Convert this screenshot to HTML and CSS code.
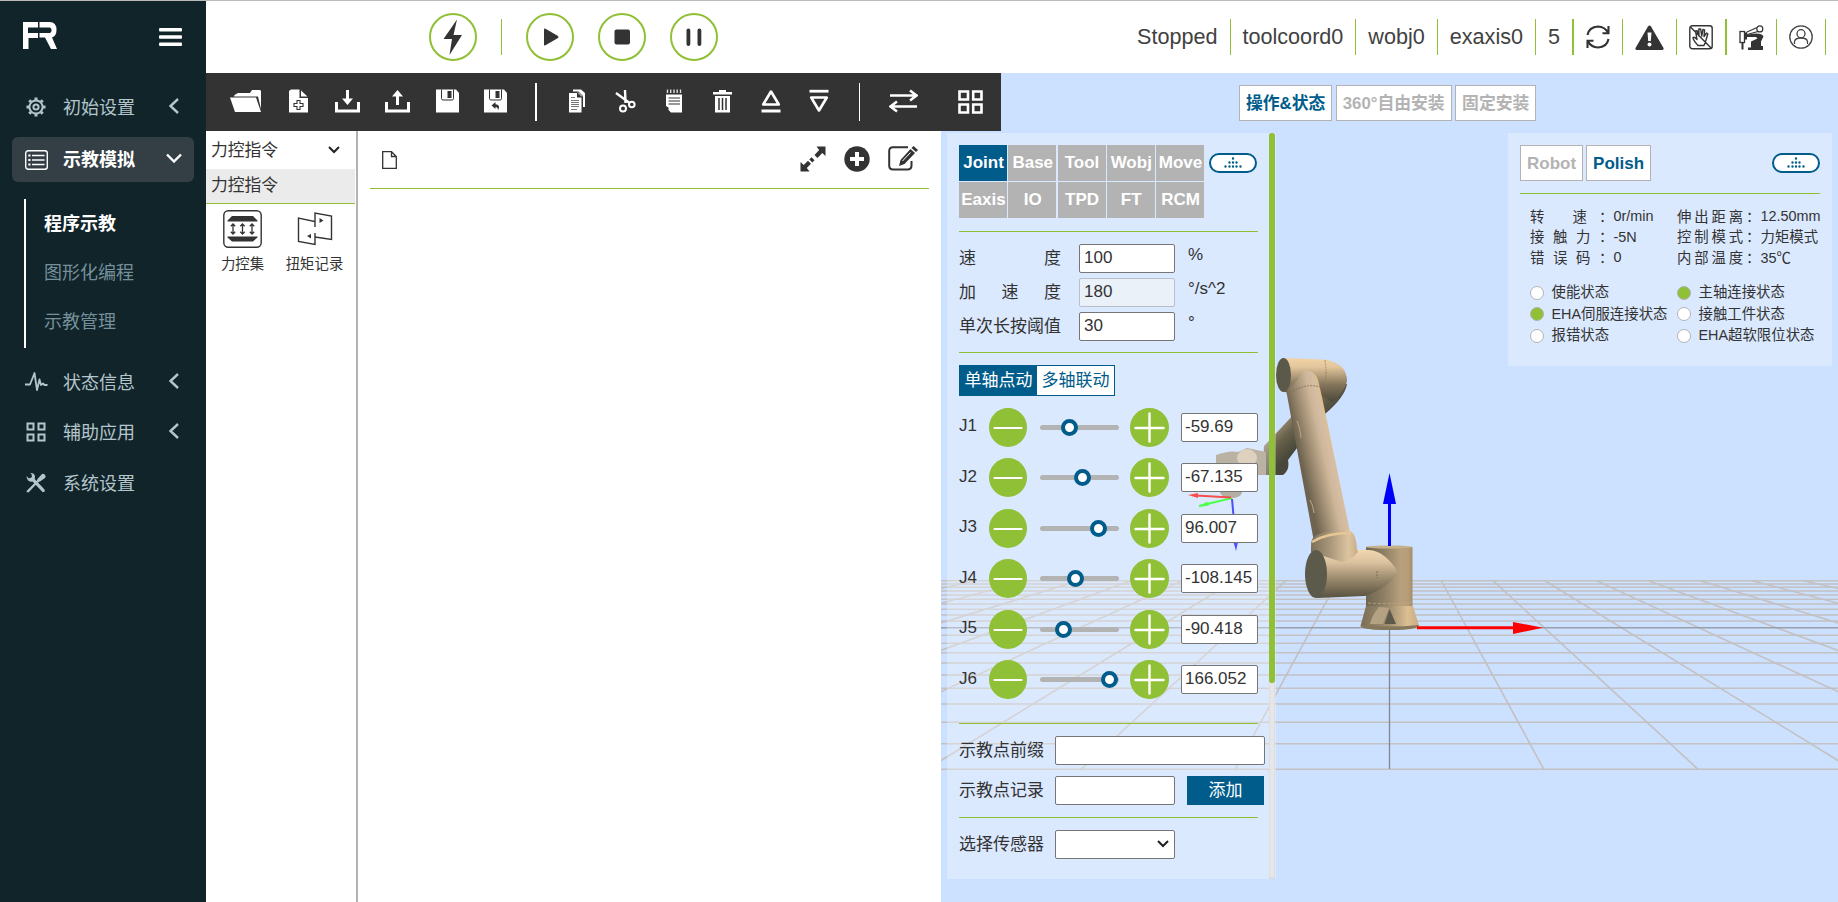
FILE: index.html
```html
<!DOCTYPE html>
<html lang="zh-CN">
<head>
<meta charset="utf-8">
<title>FR</title>
<link rel="stylesheet" href="styles.css">
</head>
<body>
<div class="app">
  <aside class="sidebar">
    <div class="brand">
      <svg class="logo" viewBox="0 0 34 27" width="34" height="27" fill="#fff"><path d="M0 0H15V5.500H5V11H15V16H5.500V27H0ZM16.500 0H26.500Q33.500 0 33.500 8Q33.500 14 29 15.500L34 27H28L22 15.500H16.500V11H26Q28.500 11 28.500 8.200T26 5.500H16.500Z"/></svg>
      <svg class="burger" viewBox="0 0 23 18" width="23" height="18" fill="#fff"><rect width="23" height="3.600" rx="1"/><rect y="7.200" width="23" height="3.600" rx="1"/><rect y="14.400" width="23" height="3.600" rx="1"/></svg>
    </div>
    <nav>
      <div class="item">
        <svg viewBox="0 0 22 22" width="22" height="22" fill="none" stroke="#b4c6cc" stroke-width="2"><circle cx="11" cy="11" r="6.600"/><circle cx="11" cy="11" r="2.600"/><path stroke-width="3" d="M11 1.500V4M11 18V20.500M1.500 11H4M18 11H20.500M4.300 4.300L6 6M16 16L17.700 17.700M17.700 4.300L16 6M6 16L4.300 17.700"/></svg>
        <span>初始设置</span>
        <svg class="chev" viewBox="0 0 10 16" width="10" height="16"><path d="M9 1L1.500 8L9 15"/></svg>
      </div>
      <div class="item active">
        <svg viewBox="0 0 23 20" width="23" height="20" fill="none" stroke="#fff" stroke-width="1.400"><rect x=".7" y=".7" width="21.600" height="18.600" rx="2.500"/><path d="M7 5.500H19.500M7 10H19.500M7 14.500H19.500"/><path stroke-width="2" d="M3.300 5.500H5.500M3.300 10H5.500M3.300 14.500H5.500"/></svg>
        <span>示教模拟</span>
        <svg class="chev down" viewBox="0 0 16 10" width="16" height="10"><path d="M1 1.500L8 8.500L15 1.500"/></svg>
      </div>
      <div class="sub">
        <div class="current">程序示教</div>
        <div>图形化编程</div>
        <div>示教管理</div>
      </div>
      <div class="item">
        <svg viewBox="0 0 23 22" width="23" height="22" fill="none" stroke="#b4c6cc" stroke-width="1.800" stroke-linejoin="round"><path d="M0 13.500H5L8 6L9.500 2L12 19L14.500 8.500L16 14L18 12.500L19.500 14H22.500"/></svg>
        <span>状态信息</span>
        <svg class="chev" viewBox="0 0 10 16" width="10" height="16"><path d="M9 1L1.500 8L9 15"/></svg>
      </div>
      <div class="item">
        <svg viewBox="0 0 22 22" width="22" height="22" fill="none" stroke="#b4c6cc" stroke-width="2"><path d="M2.500 2.500h6v6h-6zM13.500 2.500h6v6h-6zM2.500 13.500h6v6h-6zM13.500 13.500h6v6h-6z"/></svg>
        <span>辅助应用</span>
        <svg class="chev" viewBox="0 0 10 16" width="10" height="16"><path d="M9 1L1.500 8L9 15"/></svg>
      </div>
      <div class="item">
        <svg viewBox="0 0 22 22" width="22" height="22" fill="#b4c6cc"><path d="M1.500 4L4 6.500L7 5L6.500 2L5 1Q9 .5 10 4L9.700 7L19.500 17.500Q20.500 20.500 17.500 20L7.500 9.500Q2 10.500 1.500 4ZM17 2Q18.500 1 20 3Q21.500 4.500 20 6L15 9.500L13.500 10L3.500 20.500L1.500 20L2 18.500L12 8.500L12.500 7Z"/></svg>
        <span>系统设置</span>
      </div>
    </nav>
  </aside>

  <div class="main">
    <header class="topbar">
      <div class="run">
        <button class="round"><svg viewBox="0 0 48 48" width="48" height="48"><path d="M28 6.500L14.500 26H23L20.500 42L33 22H24.500Z"/></svg></button>
        <i class="sep"></i>
        <button class="round"><svg viewBox="0 0 48 48" width="48" height="48"><path d="M18 16.500Q18 15 19.500 15.800L32 23Q33 24 32 25L19.500 32.200Q18 33 18 31.500Z"/></svg></button>
        <button class="round"><svg viewBox="0 0 48 48" width="48" height="48"><rect x="16.500" y="16.500" width="15.500" height="15" rx="2"/></svg></button>
        <button class="round"><svg viewBox="0 0 48 48" width="48" height="48"><rect x="16.500" y="15.500" width="3.800" height="17.500" rx="1.900"/><rect x="27.500" y="15.500" width="3.800" height="17.500" rx="1.900"/></svg></button>
      </div>
      <div class="status">
        <span>Stopped</span><span>toolcoord0</span><span>wobj0</span><span>exaxis0</span><span>5</span>
        <span><svg viewBox="0 0 24 24" width="24" height="24" fill="none" stroke="#333" stroke-width="2.100"><path d="M1.500 10Q3 2 12 1.500Q19 1.700 22.200 8M22.500 1V8.200H16.500M22.500 14Q21 22 12 22.500Q5 22.300 1.800 16M1.500 23V15.800H7.500"/></svg></span>
        <span><svg viewBox="0 0 29 25" width="29" height="25"><path d="M13 1.500Q14.500-.5 16 1.500L28.500 23Q29 25 27 25H2Q0 25 .5 23Z" fill="#333"/><path d="M12.500 7.500H16.500L15.800 16H13.200Z" fill="#fff"/><circle cx="14.500" cy="19.500" r="2" fill="#fff"/></svg></span>
        <span><svg viewBox="0 0 24 25" width="24" height="25" fill="none" stroke="#333" stroke-width="1.400" stroke-linejoin="round"><rect x=".8" y=".8" width="22.400" height="23" rx="2.500"/><path d="M1.500 2L22.500 23.500M9 20.500Q4 15 4 12.500L6 12.500L8 14.500L6.500 6L8.200 5.800L10 11L9.800 4H11.700L12.700 11L14 4.500L15.600 5L15 11.500L17.500 8L18.800 9L17 15L15 20.500Z"/></svg></span>
        <span><svg viewBox="0 0 25 25" width="25" height="25"><path d="M7 7.500L18 2.500M8 9.500L19 6.500" stroke="#333" stroke-width="1.100"/><circle cx="20.800" cy="3.900" r="3" fill="#fff" stroke="#333" stroke-width="1.200"/><rect x="1" y="6.500" width="4.500" height="11" fill="#fff" stroke="#333" stroke-width="1.300"/><path d="M2.500 17.500H4.500V24.500H2.500ZM5.500 7.500H8V9.500L17 8.500Q23.500 8.500 24.500 11.500L22 16.500V21H24V25H9V22.500H12V16.500L18.500 13.500L17 12L8 12V14.500H5.500Z" fill="#333"/></svg></span>
        <span><svg viewBox="0 0 24 24" width="24" height="24" fill="none" stroke="#444" stroke-width="1.300"><circle cx="12" cy="12" r="11.200"/><circle cx="12" cy="8.700" r="4"/><path d="M5.500 19V16.500Q6 13 12 13T18.500 16.500V19"/></svg></span>
      </div>
    </header>

    <div class="work">
      <section class="program">
        <div class="toolbar">
          <svg viewBox="0 0 31 24" width="31" height="24"><path d="M4.500 6L8 4H20L22 1H30L31 2V20L28 7.500H4Z"/><path d="M0 8.500H26L31 23H5Z"/></svg>
          <svg viewBox="0 0 19 24" width="19" height="24"><path d="M0 2L2 .5H10.500V9H19V23.500H0ZM12 1.500L18.500 7.500H12Z"/><path d="M8 11.500H11V14.500H14V17.500H11V20.500H8V17.500H5V14.500H8Z" fill="#fff" stroke="#333" stroke-width="1.100"/></svg>
          <svg viewBox="0 0 25 24" width="25" height="24"><path d="M0 13H3V20.500H22V13H25V23.500H0ZM11 1H14V9.500H18L12.500 16L7 9.500H11Z"/></svg>
          <svg viewBox="0 0 25 24" width="25" height="24"><path d="M0 13H3V20.500H22V13H25V23.500H0ZM11 16H14V7.500H18L12.500 1L7 7.500H11Z"/></svg>
          <svg viewBox="0 0 23 24" width="23" height="24"><path d="M0 .5H20L23 4V23.500H0Z"/><path d="M5.500 .5V9.500Q5.500 11 7 11H16Q17.500 11 17.500 9.500V.5" fill="none" stroke="#333"/><rect x="11.500" y="2" width="4" height="7" fill="#333"/></svg>
          <svg viewBox="0 0 23 24" width="23" height="24"><path d="M0 .5H20L23 4V23.500H0Z"/><path d="M5.500 .5V9.500Q5.500 11 7 11H16Q17.500 11 17.500 9.500V.5" fill="none" stroke="#333"/><path fill="#333" d="M11.500 2h4v7h-4zM7.500 16.500L11.500 13V15.300Q17 15.500 14 21.500Q14 18 11.500 18V20Z"/></svg>
          <i class="bar wide"></i>
          <svg viewBox="0 0 16 24" width="16" height="24"><path d="M4 .5H12L16 4V18H14V7L9.500 2.500H4Z"/><path d="M0 4H8V8.500H12.500V23.500H0Z"/><path d="M9 3.500L13 7.500" stroke="#fff"/><path d="M2 8.500H6M2 11.500H10M2 13.500H10M2 15.500H10M2 17.500H10M2 20.500H8" stroke="#777" stroke-width="1.200"/></svg>
          <svg viewBox="0 0 21 24" width="21" height="24" fill="none" stroke="#fff" stroke-width="2.400"><path d="M10 1L10.500 14M1 4L14 13.500"/><circle cx="8" cy="19.500" r="3" stroke-width="2"/><circle cx="16.800" cy="15.500" r="2.800" stroke-width="2"/></svg>
          <svg viewBox="0 0 16 24" width="16" height="24"><path d="M0 5.500H16V23.500H5L2.500 21V18.500L0 17Z"/><path d="M2.500 9H14M2.500 12H14M2.500 15H14" stroke="#333" stroke-width="1.100"/><path d="M1.500 .5V4M4.700 .5V4M8 .5V4M11.200 .5V4M14.500 .5V4" stroke="#ddd" stroke-width="1.400"/></svg>
          <svg viewBox="0 0 19 24" width="19" height="24"><path d="M0 3H6V1H13V3H19V5.500H0ZM2 7H17V23.500H2Z"/><path d="M6 9V21M9.500 9V21M13 9V21" stroke="#333" stroke-width="1.500"/></svg>
          <svg viewBox="0 0 20 24" width="20" height="24"><path d="M10 2.500L17.800 15.500H2.200Z" fill="none" stroke="#fff" stroke-width="2.600" stroke-linejoin="round"/><path d="M.5 20.500H19.500V23.500H.5Z"/></svg>
          <svg viewBox="0 0 20 24" width="20" height="24"><path d="M10 21.500L17.800 8.500H2.200Z" fill="none" stroke="#fff" stroke-width="2.600" stroke-linejoin="round"/><path d="M.5 .8H19.500V3.600H.5Z"/></svg>
          <i class="bar"></i>
          <svg viewBox="0 0 29 24" width="29" height="24" fill="none" stroke="#fff" stroke-width="2.500"><path d="M1 6.500H27M21 1.500L27.500 6.500L21 11.500M28 17.500H2M8 12.500L1.500 17.500L8 22.500"/></svg>
          <svg viewBox="0 0 25 24" width="25" height="24" fill="none" stroke="#fff" stroke-width="2.600"><path d="M1.500 1.500H10V9.500H1.500ZM15.200 1.500H23.500V9.500H15.200ZM1.500 14.500H10V22.500H1.500ZM15.200 14.500H23.500V22.500H15.200Z"/></svg>
        </div>
        <div class="body">
          <div class="palette">
            <div class="pick"><span>力控指令</span><svg viewBox="0 0 12 8" width="12" height="8"><path d="M1 1L6 6L11 1" fill="none" stroke="#222" stroke-width="2"/></svg></div>
            <div class="group">力控指令</div>
            <div class="cmds">
              <div><svg viewBox="0 0 39 38" width="39" height="38"><rect x=".8" y=".8" width="37.400" height="36.400" rx="4.500" fill="#fff" stroke="#333" stroke-width="1.400"/><path d="M9 6H30L34.500 10.500V11.500H4.500V10.500ZM4.500 26.500H34.500V27.500L30 31.500H9L4.500 27.500Z" fill="#333"/><path d="M10 14V24M7.800 16.300L10 14L12.200 16.300M7.800 21.700L10 24L12.200 21.700M19.500 14V24M17.300 16.300L19.500 14L21.700 16.300M17.300 21.700L19.500 24L21.700 21.700M29 14V24M26.800 16.300L29 14L31.200 16.300M26.800 21.700L29 24L31.200 21.700" fill="none" stroke="#333" stroke-width="1.300"/></svg><span>力控集</span></div>
              <div><svg viewBox="0 0 36 38" width="36" height="38"><path d="M18 23V34.500L1.500 31.500V8L18 11.500V17M18 11.500V3L34.500 6V29.500L18 27" fill="none" stroke="#333" stroke-width="1.400"/><path d="M22.500 8L26.500 10.500L22.500 13ZM14 24V28.500L10 26Z" fill="#333"/></svg><span>扭矩记录</span></div>
            </div>
          </div>
          <div class="editor">
            <div class="edithead">
              <svg class="file" viewBox="0 0 15 18" width="15" height="18" fill="none" stroke="#333" stroke-width="1.300"><path d="M.7 .7H9.500L14.300 5.500V17.300H.7ZM9.500 .7V5.500H14.300"/></svg>
              <svg viewBox="0 0 26 26" width="26" height="26" fill="#333"><path d="M25.500 .5V10L22.300 7L17.500 12L14.500 9L19.200 4L16.500 .5ZM.5 25.500V16L3.700 19L8 14.700L11 17.700L6.800 22L9.500 25.500ZM9.300 13.500L11.500 11.300L14.500 14.300L12.300 16.500Z"/></svg>
              <svg viewBox="0 0 26 26" width="26" height="26"><circle cx="13" cy="13" r="12.700" fill="#333"/><path d="M13 6V20M6 13H20" stroke="#fff" stroke-width="4"/></svg>
              <svg viewBox="0 0 30 26" width="30" height="26"><path d="M20 1.200H5Q1.200 1.200 1.200 5V19.500Q1.200 23.500 5 23.500H19.500Q23.500 23.500 23.500 19.500V15" fill="none" stroke="#333" stroke-width="2"/><path d="M22.500 3L27 7L16.500 18L11 20L12.500 14ZM23.500 2L25.500 0L30 4L28 6Z" fill="#333"/><path d="M14.500 15L22.500 6.500" stroke="#fff"/></svg>
            </div>
          </div>
        </div>
      </section>

      <section class="view">
        <svg class="scene" viewBox="941 73 897 829" width="897" height="829">
          <defs>
            <linearGradient id="tube" x1="0" y1="0" x2="0" y2="1"><stop offset="0" stop-color="#f2d6b0"/><stop offset=".25" stop-color="#dcc3a0"/><stop offset=".6" stop-color="#9b8a6d"/><stop offset="1" stop-color="#56513f"/></linearGradient>
            <linearGradient id="elbow" x1="0" y1="0" x2="0" y2="1"><stop offset="0" stop-color="#f2d3a5"/><stop offset=".2" stop-color="#e3c69c"/><stop offset=".6" stop-color="#85765b"/><stop offset="1" stop-color="#4b4738"/></linearGradient>
            <linearGradient id="arm" gradientUnits="userSpaceOnUse" x1="1302" y1="465" x2="1337" y2="457"><stop offset="0" stop-color="#6e634e"/><stop offset=".35" stop-color="#a39076"/><stop offset=".65" stop-color="#cdb698"/><stop offset=".82" stop-color="#d4bda5"/><stop offset="1" stop-color="#e0bf8a"/></linearGradient>
            <linearGradient id="collar" x1="0" y1="0" x2="1" y2="0"><stop offset="0" stop-color="#7d7058"/><stop offset=".4" stop-color="#a8967a"/><stop offset=".8" stop-color="#dcc4a0"/><stop offset="1" stop-color="#c9ae84"/></linearGradient>
            <linearGradient id="base" x1="0" y1="0" x2="1" y2="0"><stop offset="0" stop-color="#6e664f"/><stop offset=".35" stop-color="#8b7c63"/><stop offset=".75" stop-color="#b8a07c"/><stop offset=".9" stop-color="#b79e79"/><stop offset="1" stop-color="#a58d6a"/></linearGradient>
            <linearGradient id="foot" x1="0" y1="0" x2="1" y2="0"><stop offset="0" stop-color="#7a6e56"/><stop offset=".5" stop-color="#a18f71"/><stop offset=".8" stop-color="#dcbf93"/><stop offset="1" stop-color="#c7aa7e"/></linearGradient>
            <linearGradient id="fore" gradientUnits="userSpaceOnUse" x1="1275" y1="425" x2="1297" y2="447"><stop offset="0" stop-color="#a39275"/><stop offset=".5" stop-color="#67604b"/><stop offset="1" stop-color="#48483a"/></linearGradient>
          </defs>
          <g id="grid" stroke="#c3c1c1" stroke-width="1.600"></g>
          <path d="M941 627.700H1838" stroke="#9aa0aa" stroke-width="1.500"/>
          <path d="M1389.500 627V769" stroke="#85878f" stroke-width="1.300"/>
          <path d="M1347 384Q1345 397 1325 414L1300 380ZM1296 412L1264 446L1262 475H1283Q1290 470 1288 460L1300 444L1298 430Z" fill="url(#fore)"/>
          <path d="M1216 455Q1230 450 1238 452L1247 448L1266 452V475H1238L1216 466Z" fill="#9c917c"/>
          <ellipse cx="1247" cy="458" rx="10" ry="9" fill="#d0bea4"/>
          <path d="M1220 486H1242V493Q1240 498 1231 498Q1220 497 1220 492Z" fill="#968d7b"/>
          <path d="M1232 498L1199 506" stroke="#00ff00" stroke-width="2"/><path d="M1198.500 507L1207 501.500L1209 505.500Z" fill="#00ff00"/>
          <path d="M1231 497.500L1196 495.500" stroke="#f20000" stroke-width="2"/><path d="M1188 495L1198 493V498Z" fill="#f00"/>
          <path d="M1232 499L1236 544" stroke="#0000ff" stroke-width="2"/><path d="M1236 551L1233.500 542H1238Z" fill="#0000ff"/>
          <path d="M1284 358L1324 359.500Q1347 363 1347 381Q1345 392 1332 402L1320 395L1284 392Z" fill="url(#elbow)"/>
          <path d="M1286 390Q1300 380 1303 370Q1315 370 1318 380Q1320 388 1322 397L1350 532L1314 542L1287 395Z" fill="url(#arm)"/>
          <path d="M1293 391Q1307 383 1320 387" fill="none" stroke="#75674f" stroke-width=".7" stroke-dasharray="2 1"/>
          <path d="M1325 360Q1327 374 1325 382" fill="none" stroke="#8c785a" stroke-width=".7" stroke-dasharray="2 1"/>
          <ellipse cx="1283.500" cy="375" rx="7.500" ry="17" fill="#5b594a"/>
          <path d="M1297 421Q1300 427 1301 438M1310 500Q1313 505 1314 513" fill="none" stroke="#b09e83" stroke-width="1.200"/>
          <path d="M1366 547H1412.500V607H1366Z" fill="url(#base)"/><ellipse cx="1389" cy="547" rx="23.500" ry="1.500" fill="#c6b18d"/>
          <path d="M1318 550H1369Q1385 551 1398 572Q1388 588 1365 596L1317 598Z" fill="url(#tube)"/>
          <path d="M1311 547Q1310 537 1319 534Q1335 529 1350 531Q1356 533 1357 549L1358 552Q1352 560 1342 562L1311 552Z" fill="url(#collar)"/>
          <path d="M1312 542Q1326 533 1351 533" fill="none" stroke="#e5c795" stroke-width="2.500"/>
          <ellipse cx="1316" cy="574" rx="11" ry="24" fill="#5b5a4b"/>
          <path d="M1377 571V578" stroke="#6a604c" stroke-width=".8" stroke-dasharray="2 1"/>
          <path d="M1368 603Q1388 604.500 1412 602.500" fill="none" stroke="#c0ab88" stroke-width=".8" stroke-dasharray="3 2"/>
          <path d="M1366 606H1413L1419 626Q1418 630 1390 630T1360.500 626Z" fill="url(#foot)"/>
          <path d="M1379 607Q1372 615 1370 624H1383L1389 608Z" fill="#b5a282"/>
          <path d="M1389.500 609L1396 624H1384.500Z" fill="#5d594a"/>
          <path d="M1360.500 625Q1390 628 1419 625Q1418 630 1390 630T1360.500 625" fill="#85775b"/>
          <path d="M1389.500 546V500" stroke="#0000fa" stroke-width="3"/><path d="M1389.500 473L1396 504H1383Z" fill="#0000fa"/>
          <path d="M1417 627.700H1514" stroke="#f00" stroke-width="3"/><path d="M1543 627.700L1513 622V634Z" fill="#f00"/>
        </svg>

        <div class="modes"><b class="on">操作&amp;状态</b><b>360°自由安装</b><b>固定安装</b></div>

        <div class="panel jog">
          <div class="jogmain">
            <div class="jogtop">
              <div class="tabs"><b class="on">Joint</b><b>Base</b><b>Tool</b><b>Wobj</b><b>Move</b><b>Eaxis</b><b>IO</b><b>TPD</b><b>FT</b><b>RCM</b></div>
              <span class="chip"><svg viewBox="0 0 18 12" width="18" height="12"><path d="M9 1.500h.01M5.500 5.500h.01M9 5.500h.01M12.500 5.500h.01M1.500 9.500h.01M5.500 9.500h.01M9 9.500h.01M12.500 9.500h.01M16.500 9.500h.01" stroke="#005c8a" stroke-width="2.400" stroke-linecap="round"/></svg></span>
            </div>
            <hr>
            <div class="params">
              <label>速度</label><input value="100"><span>%</span>
              <label>加速度</label><input value="180" disabled><span>°/s^2</span>
              <label>单次长按阈值</label><input value="30"><span>°</span>
            </div>
            <hr>
            <div class="toggle"><span class="on">单轴点动</span><span>多轴联动</span></div>
            <div class="joints" id="joints"></div>
            <hr>
            <div class="teach">
              <label>示教点前缀</label><input class="long">
              <label>示教点记录</label><input><button>添加</button>
            </div>
            <hr>
            <div class="teach sensor">
              <label>选择传感器</label>
              <div class="select"><svg viewBox="0 0 12 8" width="12" height="8"><path d="M1 1L6 6L11 1" fill="none" stroke="#222" stroke-width="2"/></svg></div>
            </div>
          </div>
          <div class="track"><div class="thumb"></div></div>
        </div>

        <div class="panel state">
          <div class="statetop"><b>Robot</b><b class="on">Polish</b>
            <span class="chip"><svg viewBox="0 0 18 12" width="18" height="12"><path d="M9 1.500h.01M5.500 5.500h.01M9 5.500h.01M12.500 5.500h.01M1.500 9.500h.01M5.500 9.500h.01M9 9.500h.01M12.500 9.500h.01M16.500 9.500h.01" stroke="#005c8a" stroke-width="2.400" stroke-linecap="round"/></svg></span>
          </div>
          <hr>
          <div class="facts">
            <label>转&nbsp;速：</label><span>0r/min</span><label>伸出距离：</label><span>12.50mm</span>
            <label>接触力：</label><span>-5N</span><label>控制模式：</label><span class="cjk">力矩模式</span>
            <label>错误码：</label><span>0</span><label>内部温度：</label><span class="cjk">35℃</span>
          </div>
          <div class="lamps">
            <span><i></i>使能状态</span><span><i class="lit"></i>主轴连接状态</span>
            <span><i class="lit"></i>EHA伺服连接状态</span><span><i></i>接触工件状态</span>
            <span><i></i>报错状态</span><span><i></i>EHA超软限位状态</span>
          </div>
        </div>
      </section>
    </div>
  </div>
</div>
<script src="app.js"></script>
</body>
</html>
```

FILE: app.js
```js
// Floor grid: rows receding to the horizon, columns spreading from the robot base
const rows = [580.7, 584, 587.3, 591, 595, 599.3, 604, 609.3, 615, 621, 635.3, 643.3, 652.7, 663, 675, 688.3, 704, 722.3, 743.7, 769.3];
let lines = rows.map(y => `<path d="M941 ${y}H1838"/>`).join('');
for (let k = -10; k <= 10; k++) {
  if (k) lines += `<path d="M${1389.5 + 51.8 * k} 580.7L${1389.5 + 154.3 * k} 769.3"/>`;
}
document.getElementById('grid').innerHTML = lines;

// Joint jog rows: name, slider knob position (px), value
const joints = [['J1', 29, '-59.69'], ['J2', 42, '-67.135'], ['J3', 58.5, '96.007'], ['J4', 35.5, '-108.145'], ['J5', 23.5, '-90.418'], ['J6', 69, '166.052']];
document.getElementById('joints').innerHTML = joints.map(([name, pos, value]) => `
  <div class="joint">
    <label>${name}</label>
    <svg viewBox="0 0 39 39" width="39" height="39"><ellipse cx="19" cy="19.500" rx="19" ry="19.500" fill="#8fc035"/><path d="M5.500 20H32.500" stroke="#fff" stroke-width="2.200" stroke-linecap="round"/></svg>
    <div class="slider"><i style="left:${pos}px"></i></div>
    <svg viewBox="0 0 39 39" width="39" height="39"><circle cx="19.500" cy="19.500" r="19.500" fill="#8fc035"/><path d="M5.500 20H33.500M19.500 5.500V33.500" stroke="#fff" stroke-width="2.400" stroke-linecap="round"/></svg>
    <input value="${value}">
  </div>`).join('');
```

FILE: styles.css
```css
* { box-sizing: border-box; }
body { margin: 0; font-family: "Liberation Sans", "Noto Sans CJK SC", sans-serif; color: #333; }
svg { display: block; flex: none; }
button { padding: 0; border: 0; background: none; font: inherit; }
hr { margin: 0; border: 0; height: 1px; background: #8fc035; }
.app { display: flex; width: 1838px; height: 902px; overflow: hidden; border-top: 1px solid #bbb; background: #fff; }

.sidebar { width: 206px; background: #11242a; }
.brand { display: flex; justify-content: space-between; height: 81px; padding: 21px 24px 0 23px; }
.burger { margin-top: 6px; }
.item { display: grid; grid-template-columns: 38px 1fr 16px; align-items: center; height: 50.300px; margin: 0 12px; padding: 0 12px 2px 13px; font-size: 18px; color: #b4c6cc; }
.item > svg:first-child { margin-top: 2px; }
.item.active { height: 45px; margin: 4.700px 12px 17px; padding-bottom: 3px; border-radius: 6px; background: #333f45; color: #fff; font-weight: bold; }
.item.active svg:first-child { margin-top: 4px; }
.chev { fill: none; stroke: #b4c6cc; stroke-width: 2.4; margin-left: 3px; }
.chev.down { stroke: #fff; margin-left: 0; }
.sub { margin: 0 0 9px 24px; height: 149px; border-left: 2px solid #fff; padding: 1px 0 0 18px; font-size: 18px; line-height: 49px; color: #75909a; }
.sub .current { color: #fff; font-weight: bold; }

.main { flex: 1; display: flex; flex-direction: column; }
.topbar { display: flex; justify-content: space-between; height: 72px; }
.run { display: grid; grid-template-columns: 72px 25px 72px 72px 48px; align-items: center; padding-left: 223px; }
.round { width: 48px; height: 48px; border: 2px solid #8fc035; border-radius: 50%; }
.round svg { margin: -2px; fill: #333; }
.sep { width: 1px; height: 36px; background: #8fc035; }
.status { display: flex; align-items: center; padding-right: 12px; font-size: 21.6px; color: #414141; }
.status span { display: flex; align-items: center; height: 36px; padding: 0 12px; border-right: 1px solid #8fc035; }
.status span:nth-child(5), .status span:nth-child(8) { border-right-width: 2px; }
.status span:nth-child(-n+5) { padding-bottom: 1px; }

.work { display: flex; flex: 1; }
.program { width: 735px; display: flex; flex-direction: column; }
.toolbar { position: relative; z-index: 2; display: grid; grid-template-columns: 59px 46px 50px 51px 48px 51px 34px 46px 51px 47px 48px 48px 50px 30px 69px 25px; align-items: center; width: 795px; height: 58px; padding: 0 0 0 24px; background: #333; fill: #fff; }
.toolbar svg { margin-top: -2px; }
.toolbar svg:last-child { margin-top: 0; }
.bar { width: 1px; height: 38px; background: #fff; }
.bar.wide { width: 2px; }
.body { display: flex; flex: 1; }
.palette { width: 152px; border-right: 2px solid #b3b3b3; font-size: 16.8px; }
.pick { display: flex; justify-content: space-between; align-items: center; height: 38px; padding: 0 16px 3px 5px; }
.pick svg { margin-top: 3px; }
.group { width: 149px; height: 35px; padding-left: 5px; line-height: 34px; background: #ebebeb; border-bottom: 1px solid #8fc035; }
.cmds { display: grid; grid-template-columns: 73px 71px; font-size: 14.4px; padding-top: 6px; }
.cmds div { display: flex; flex-direction: column; align-items: center; gap: 4px; }
.editor { flex: 1; padding: 0 12px; }
.edithead { display: grid; grid-template-columns: 418px 44px 44px 30px; align-items: center; height: 58px; padding-left: 12px; border-bottom: 1px solid #8fc035; }
.edithead svg { margin-top: -2px; }
.edithead .file { margin-top: 0; }

.view { position: relative; flex: 1; background: #cce0ff; }
.scene { position: absolute; left: 0; top: 0; }
.modes { position: absolute; left: 298px; top: 12px; display: flex; gap: 3.500px; font-size: 16.800px; }
.modes b, .statetop b { height: 36px; padding: 0 6px; border: 1px solid #b3b3b3; background: #fff; color: #b3b3b3; line-height: 35px; }
.modes b.on, .statetop b.on { color: #005c8a; }
.panel { position: absolute; top: 60px; background: rgba(255, 255, 255, .3); }
.jog { left: 6px; width: 329px; height: 746px; display: flex; font-size: 17px; }
.jogmain { width: 322px; padding: 12px 0 0 12px; }
.jogmain > hr { width: 299px; }
.track { width: 6px; border-radius: 3px; background: #e6e6e6; box-shadow: inset 0 0 1px #999; }
.thumb { height: 550px; border-radius: 3px; background: #8fc035; }
.jogtop { display: flex; gap: 5px; height: 86px; }
.tabs { display: grid; grid-template-columns: 48px 48px 48px 48px 48px; grid-template-rows: 36px 36px; gap: 1px 1.250px; width: 245px; color: #fff; line-height: 35px; }
.tabs b { background: #b3b3b3; text-align: center; white-space: nowrap; padding-left: 1px; }
.tabs b.on { background: #005c8a; }
.chip { display: flex; align-items: center; justify-content: center; width: 48px; height: 20px; margin-top: 8px; border: 2px solid #005c8a; border-radius: 10px; background: #fff; }
input, .select { width: 96px; height: 29px; padding: 0 4px 1px; border: 1px solid #767676; border-radius: 2px; background: #fff; font: 17px "Liberation Sans", sans-serif; color: #333; }
input:disabled { background: #ebf1f8; border-color: #b8bfcb; }
.params { display: grid; grid-template-columns: 102px 96px 70px; column-gap: 18px; row-gap: 5px; padding-top: 12px; height: 120px; grid-auto-rows: 29px; align-items: center; }
.params label { text-align-last: justify; margin-top: -4px; }
.params span { margin: -7px 0 0 -5px; }
.toggle { display: flex; width: 156px; height: 31px; margin-top: 12px; border: 1px solid #005c8a; line-height: 29px; color: #005c8a; background: #fff; }
.toggle span { width: 77px; text-align: center; white-space: nowrap; }
.toggle .on { background: #005c8a; color: #fff; }
.joints { height: 327px; padding-top: 6px; }
.joint { display: grid; grid-template-columns: 30px 51px 90px 51px 77px; align-items: center; height: 50.500px; }
.joint label { margin-top: -2px; }
.joint input { width: 77px; padding-left: 3px; }
.slider { position: relative; width: 79px; height: 5px; border-radius: 3px; background: #b3b3b3; }
.slider i { position: absolute; top: -6px; width: 17px; height: 17px; margin-left: -8.500px; border: 4px solid #005c8a; border-radius: 50%; background: #fff; }
.teach { display: grid; grid-template-columns: 96px 120px 77px; column-gap: 0; row-gap: 11px; align-items: center; padding: 12px 0; height: 93px; }
.teach label { margin-top: -4px; white-space: nowrap; }
.teach input, .select { width: 120px; }
.teach .long { grid-column: 2 / 4; width: 210px; }
.teach button { width: 77px; height: 29px; margin-left: 12px; background: #005c8a; color: #fff; line-height: 27px; }
.select { display: flex; align-items: center; justify-content: flex-end; padding-right: 5px; }
.sensor { height: 53px; }

.state { left: 567px; width: 324px; height: 233px; padding: 12px; font-size: 14.400px; }
.statetop { display: flex; gap: 3px; height: 48px; font-size: 17px; }
.statetop .chip { margin-left: auto; }
.facts { display: grid; grid-template-columns: 83.500px 63.500px 83.500px 70px; grid-auto-rows: 20.600px; align-items: center; padding: 12px 0 0 10px; white-space: nowrap; }
.facts label, .facts .cjk { margin-top: -2px; }
.facts label { text-align-last: justify; }
.lamps { display: grid; grid-template-columns: 147px 150px; grid-auto-rows: 21.500px; align-items: center; padding: 14px 0 0 10px; white-space: nowrap; }
.lamps span { display: flex; align-items: center; gap: 7.500px; height: 20px; line-height: 19px; }
.lamps i { width: 14px; height: 14px; border: 1px solid #b3b3b3; border-radius: 50%; background: #fff; }
.lamps .lit { background: #8fc035; }
```
